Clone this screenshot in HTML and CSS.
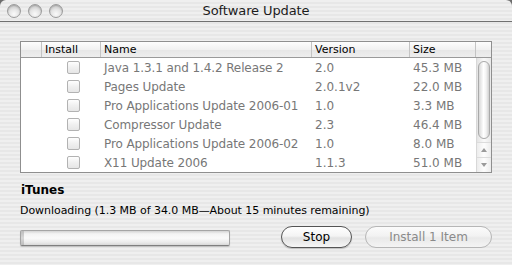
FILE: index.html
```html
<!DOCTYPE html>
<html>
<head>
<meta charset="utf-8">
<link rel="stylesheet" href="styles.css">
</head>
<body>
<div class="window">
  <div class="titlebar">
    <div class="lights">
      <span class="light"></span><span class="light"></span><span class="light"></span>
    </div>
    <div class="title">Software Update</div>
  </div>
  <div class="content">
    <div class="table">
      <div class="thead">
        <div class="th c0"></div>
        <div class="th c1">Install</div>
        <div class="th c2">Name</div>
        <div class="th c3">Version</div>
        <div class="th c4">Size</div>
        <div class="th c5"></div>
      </div>
      <div class="tbody">
        <div class="rows">
          <div class="row"><div class="c0"></div><div class="c1"><span class="check"></span></div><div class="c2">Java 1.3.1 and 1.4.2 Release 2</div><div class="c3">2.0</div><div class="c4">45.3 MB</div></div>
          <div class="row"><div class="c0"></div><div class="c1"><span class="check"></span></div><div class="c2">Pages Update</div><div class="c3">2.0.1v2</div><div class="c4">22.0 MB</div></div>
          <div class="row"><div class="c0"></div><div class="c1"><span class="check"></span></div><div class="c2">Pro Applications Update 2006-01</div><div class="c3">1.0</div><div class="c4">3.3 MB</div></div>
          <div class="row"><div class="c0"></div><div class="c1"><span class="check"></span></div><div class="c2">Compressor Update</div><div class="c3">2.3</div><div class="c4">46.4 MB</div></div>
          <div class="row"><div class="c0"></div><div class="c1"><span class="check"></span></div><div class="c2">Pro Applications Update 2006-02</div><div class="c3">1.0</div><div class="c4">8.0 MB</div></div>
          <div class="row"><div class="c0"></div><div class="c1"><span class="check"></span></div><div class="c2">X11 Update 2006</div><div class="c3">1.1.3</div><div class="c4">51.0 MB</div></div>
        </div>
        <div class="scrollbar">
          <div class="track">
            <div class="thumb"></div>
          </div>
          <div class="arrow up">
            <svg width="8" height="6" viewBox="0 0 8 6"><path d="M4 1 L7 5 L1 5 Z" fill="#9a9a9a"/></svg>
          </div>
          <div class="arrow down">
            <svg width="8" height="6" viewBox="0 0 8 6"><path d="M1 1 L7 1 L4 5 Z" fill="#9a9a9a"/></svg>
          </div>
        </div>
      </div>
    </div>
    <div class="item">iTunes</div>
    <div class="status">Downloading (1.3 MB of 34.0 MB—About 15 minutes remaining)</div>
    <div class="bottom">
      <div class="progress"><div class="progress-cap"></div></div>
      <div class="buttons">
        <button class="btn">Stop</button>
        <button class="btn disabled">Install 1 Item</button>
      </div>
    </div>
  </div>
</div>
</body>
</html>
```

FILE: styles.css
```css
* { box-sizing: border-box; }
html, body {
  margin: 0;
  padding: 0;
  width: 512px;
  height: 265px;
  overflow: hidden;
  background: #6d6d6d;
}
.window {
  width: 512px;
  height: 265px;
  border-radius: 6px 6px 0 0;
  overflow: hidden;
  background-color: #ececec;
  background-image: repeating-linear-gradient(to bottom, #efefef 0, #efefef 2px, #e7e7e7 2px, #e7e7e7 4px);
  font-family: "DejaVu Sans", "Verdana", sans-serif;
  color: #000;
}
.titlebar {
  height: 22px;
  border-bottom: 1px solid #717171;
  display: flex;
  align-items: center;
  position: relative;
}
.lights {
  display: flex;
  gap: 7px;
  padding-left: 7px;
  padding-top: 1px;
}
.light {
  width: 14px;
  height: 14px;
  border-radius: 50%;
  border: 1px solid #9b9b9b;
  background: radial-gradient(circle at 50% 75%, #fafafa 0, #e4e4e4 45%, #c4c4c4 80%, #b0b0b0 100%);
  box-shadow: inset 0 1px 1px rgba(0,0,0,0.15);
}
.title {
  position: absolute;
  left: 0;
  right: 0;
  top: 3px;
  text-align: center;
  font-size: 13px;
  color: #1c1c1c;
  letter-spacing: -0.1px;
}
.content {
  padding: 19px 20px 0 20px;
}
.table {
  width: 472px;
  height: 132px;
  border: 1px solid #8f8f8f;
  background: #fff;
  display: flex;
  flex-direction: column;
}
.thead {
  display: flex;
  height: 16px;
  border-bottom: 1px solid #9a9a9a;
  background: linear-gradient(to bottom, #fdfdfd 0, #f1f1f1 50%, #e6e6e6 51%, #eeeeee 100%);
  font-size: 11px;
  line-height: 15px;
}
.th {
  border-right: 1px solid #c4c4c4;
  padding-left: 3px;
  color: #000;
}
.th.c5 { border-right: none; flex: 1; }
.c0 { width: 21px; flex: none; }
.c1 { width: 59px; flex: none; }
.c2 { width: 211px; flex: none; }
.c3 { width: 98px; flex: none; }
.c4 { width: 66px; flex: none; }
.tbody {
  flex: 1;
  display: flex;
}
.rows {
  width: 455px;
}
.row {
  display: flex;
  height: 19px;
  align-items: center;
  font-size: 12px;
  color: #777777;
}
.row .c1 {
  display: flex;
  justify-content: center;
  padding-left: 4px;
}
.row .c2 { padding-left: 3px; white-space: nowrap; letter-spacing: -0.1px; }
.row .c3 { padding-left: 3px; }
.row .c4 { padding-left: 3px; }
.check {
  width: 13px;
  height: 13px;
  border: 1px solid #b2b2b2;
  border-radius: 2px;
  background: linear-gradient(to bottom, #fefefe, #f0f0f0 50%, #e6e6e6 100%);
  display: block;
}
.scrollbar {
  width: 16px;
  display: flex;
  flex-direction: column;
  border-left: 1px solid #d8d8d8;
  background: #f7f7f7;
}
.track {
  flex: 1;
  position: relative;
  background: linear-gradient(to right, #e4e4e4, #f9f9f9 50%, #e9e9e9);
}
.thumb {
  position: absolute;
  left: 1px;
  right: 1px;
  top: 3px;
  height: 78px;
  border-radius: 7px;
  border: 1px solid #a9a9a9;
  background: linear-gradient(to right, #d8d8d8, #ffffff 45%, #f3f3f3 70%, #cfcfcf);
}
.arrow {
  height: 15px;
  display: flex;
  align-items: center;
  justify-content: center;
  background: linear-gradient(to right, #ececec, #fdfdfd 50%, #ececec);
  border-top: 1px solid #dcdcdc;
}
.item {
  margin-top: 10px;
  font-weight: bold;
  font-size: 12px;
  line-height: 15px;
  padding-left: 1px;
}
.status {
  margin-top: 6px;
  font-size: 11px;
  line-height: 13px;
  letter-spacing: -0.05px;
}
.bottom {
  display: flex;
  align-items: center;
  margin-top: 9px;
}
.progress {
  width: 211px;
  height: 16px;
  margin-top: 2px;
  border: 1px solid #a5a5a5;
  border-bottom-color: #7f7f7f;
  border-radius: 2px;
  background: linear-gradient(to bottom, #d4d4d4 0, #f3f3f3 20%, #fafafa 50%, #ececec 80%, #d8d8d8 100%);
  box-shadow: 0 1px 1px rgba(0,0,0,0.18);
  position: relative;
}
.progress-cap {
  width: 3px;
  height: 100%;
  background: linear-gradient(to bottom, #bdbdbd, #d8d8d8 50%, #bcbcbc);
}
.buttons {
  display: flex;
  gap: 13px;
  margin-left: 51px;
}
.btn {
  height: 22px;
  border-radius: 11px;
  border: 1px solid #555;
  background: linear-gradient(to bottom, #ffffff 0, #f4f4f4 45%, #e2e2e2 55%, #f6f6f6 100%);
  font-family: "DejaVu Sans", sans-serif;
  font-size: 12px;
  color: #000;
  padding: 0;
  box-shadow: 0 1px 1px rgba(0,0,0,0.2);
}
.btn:first-child { width: 71px; }
.btn.disabled {
  width: 127px;
  color: #8a8a8a;
  border-color: #b6b6b6;
  background: linear-gradient(to bottom, #fbfbfb 0, #f2f2f2 45%, #e9e9e9 55%, #f4f4f4 100%);
  box-shadow: none;
}
```
